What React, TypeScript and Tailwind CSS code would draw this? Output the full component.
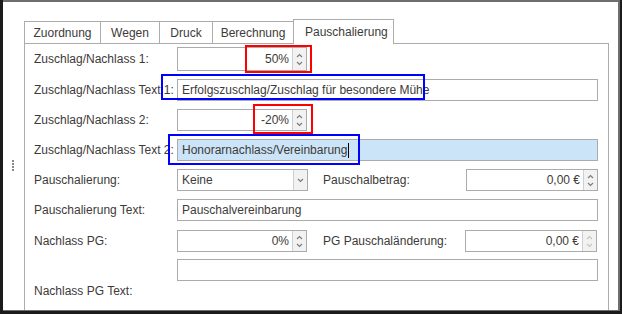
import React from "react";

const ink = "text-[#3d3a38]";

function Chevron({ dir, faded }: { dir: "up" | "down"; faded?: boolean }) {
  return (
    <svg width="7" height="5" viewBox="0 0 7 5" className="block">
      <path
        d={dir === "up" ? "M1 4 L3.5 1.5 L6 4" : "M1 1 L3.5 3.5 L6 1"}
        fill="none"
        stroke={faded ? "#c4c4c4" : "#7c7c7c"}
        strokeWidth="1.2"
      />
    </svg>
  );
}

function Spinner({ faded }: { faded?: boolean }) {
  return (
    <div className="w-[14px] h-full border-l border-[#cfcfcf] bg-[#f2f2f2] flex flex-col items-center justify-center gap-[3px]">
      <Chevron dir="up" faded={faded} />
      <Chevron dir="down" faded={faded} />
    </div>
  );
}

function NumberBox({ value, w, h = "h-[22px]", faded }: { value: string; w: string; h?: string; faded?: boolean }) {
  return (
    <div className={`${w} ${h} border border-[#ababab] bg-white flex`}>
      <div className={`flex-1 flex items-center justify-end pr-[3px] ${ink}`}>{value}</div>
      <Spinner faded={faded} />
    </div>
  );
}

function TextBox({ value, active }: { value?: string; active?: boolean }) {
  return (
    <div
      className={`w-[421px] h-[22px] border border-[#ababab] flex items-center pl-[4px] ${ink} ${
        active ? "bg-[#cce4f7]" : "bg-white"
      }`}
    >
      {value}
      {active && <span className="w-px h-[15px] bg-black ml-px" />}
    </div>
  );
}

function Row({ label, children, className = "" }: { label?: string; children: React.ReactNode; className?: string }) {
  return (
    <div className={`flex items-center ${className}`}>
      <div className={`w-[143px] shrink-0 ${ink}`}>{label}</div>
      {children}
    </div>
  );
}

const tabs = [
  { name: "Zuordnung", w: "w-[77px]" },
  { name: "Wegen", w: "w-[60px]" },
  { name: "Druck", w: "w-[54px]" },
  { name: "Berechnung", w: "w-[82px]" },
];

export default function App() {
  return (
    <div className="relative w-[622px] h-[314px] overflow-hidden bg-white font-['Liberation_Sans',Arial,sans-serif] text-[12px] leading-[14px]">
      {/* window frame */}
      <div className="w-full h-full border-l-[3px] border-r-2 border-b-[3px] border-[#1b1b1b]">
        <div className="w-full h-full border-t-2 border-r-2 border-b border-[#6e6e6e] flex overflow-hidden">
          {/* splitter grip */}
          <div className="w-[21px] shrink-0 flex flex-col items-center pt-[158px] gap-[1px] pr-[1px]">
            {[0, 1, 2, 3].map((i) => (
              <div key={i} className="w-[2px] h-[2px] bg-[#8a8a8a]" />
            ))}
          </div>

          <div className="pt-[17px]">
            {/* tabs */}
            <div className="flex items-end h-[24px]">
              {tabs.map((t, i) => (
                <div
                  key={t.name}
                  className={`${t.w} h-[22px] border border-b-0 border-[#acacac] bg-white flex items-center justify-center ${ink} ${
                    i > 0 ? "-ml-px" : ""
                  }`}
                >
                  {t.name}
                </div>
              ))}
              <div
                className={`relative z-10 -ml-px -mb-px h-[25px] w-[101px] border border-b-0 border-[#acacac] bg-white flex items-center pl-[11px] ${ink}`}
              >
                Pauschalierung
              </div>
            </div>

            {/* panel */}
            <div className="w-[585px] h-[290px] border border-[#acacac] pl-[9px] pt-[3px]">
              <Row label="Zuschlag/Nachlass 1:">
                <NumberBox value="50%" w="w-[130px]" h="h-[24px]" />
              </Row>
              <Row label="Zuschlag/Nachlass Text 1:" className="mt-[8px]">
                <TextBox value="Erfolgszuschlag/Zuschlag für besondere Mühe" />
              </Row>
              <Row label="Zuschlag/Nachlass 2:" className="mt-[8px]">
                <NumberBox value="-20%" w="w-[130px]" />
              </Row>
              <Row label="Zuschlag/Nachlass Text 2:" className="mt-[8px]">
                <TextBox value="Honorarnachlass/Vereinbarung" active />
              </Row>
              <Row label="Pauschalierung:" className="mt-[8px]">
                <div className="w-[131px] h-[22px] border border-[#ababab] bg-white flex">
                  <div className={`flex-1 flex items-center pl-[4px] ${ink}`}>Keine</div>
                  <div className="w-[14px] h-full border-l border-[#cfcfcf] bg-[#f2f2f2] flex items-center justify-center">
                    <Chevron dir="down" />
                  </div>
                </div>
                <div className={`ml-[15px] w-[143px] ${ink}`}>Pauschalbetrag:</div>
                <NumberBox value="0,00 €" w="w-[132px]" />
              </Row>
              <Row label="Pauschalierung Text:" className="mt-[8px]">
                <TextBox value="Pauschalvereinbarung" />
              </Row>
              <Row label="Nachlass PG:" className="mt-[9px]">
                <NumberBox value="0%" w="w-[130px]" />
                <div className={`ml-[16px] w-[142px] ${ink}`}>PG Pauschaländerung:</div>
                <NumberBox value="0,00 €" w="w-[132px]" faded />
              </Row>
              <Row className="mt-[7px]">
                <TextBox />
              </Row>
              <div className={`mt-[3px] ${ink}`}>Nachlass PG Text:</div>
            </div>
          </div>
        </div>
      </div>

      {/* annotation marks */}
      <div className="absolute left-[245px] top-[45px] w-[67px] h-[28px] border-2 border-[#ff0000]" />
      <div className="absolute left-[253px] top-[104px] w-[60px] h-[30px] border-2 border-[#ff0000]" />
      <div className="absolute left-[161px] top-[74px] w-[264px] h-[26px] border-2 border-[#0000ff]" />
      <div className="absolute left-[168px] top-[134px] w-[192px] h-[31px] border-2 border-[#0000ff]" />
    </div>
  );
}
